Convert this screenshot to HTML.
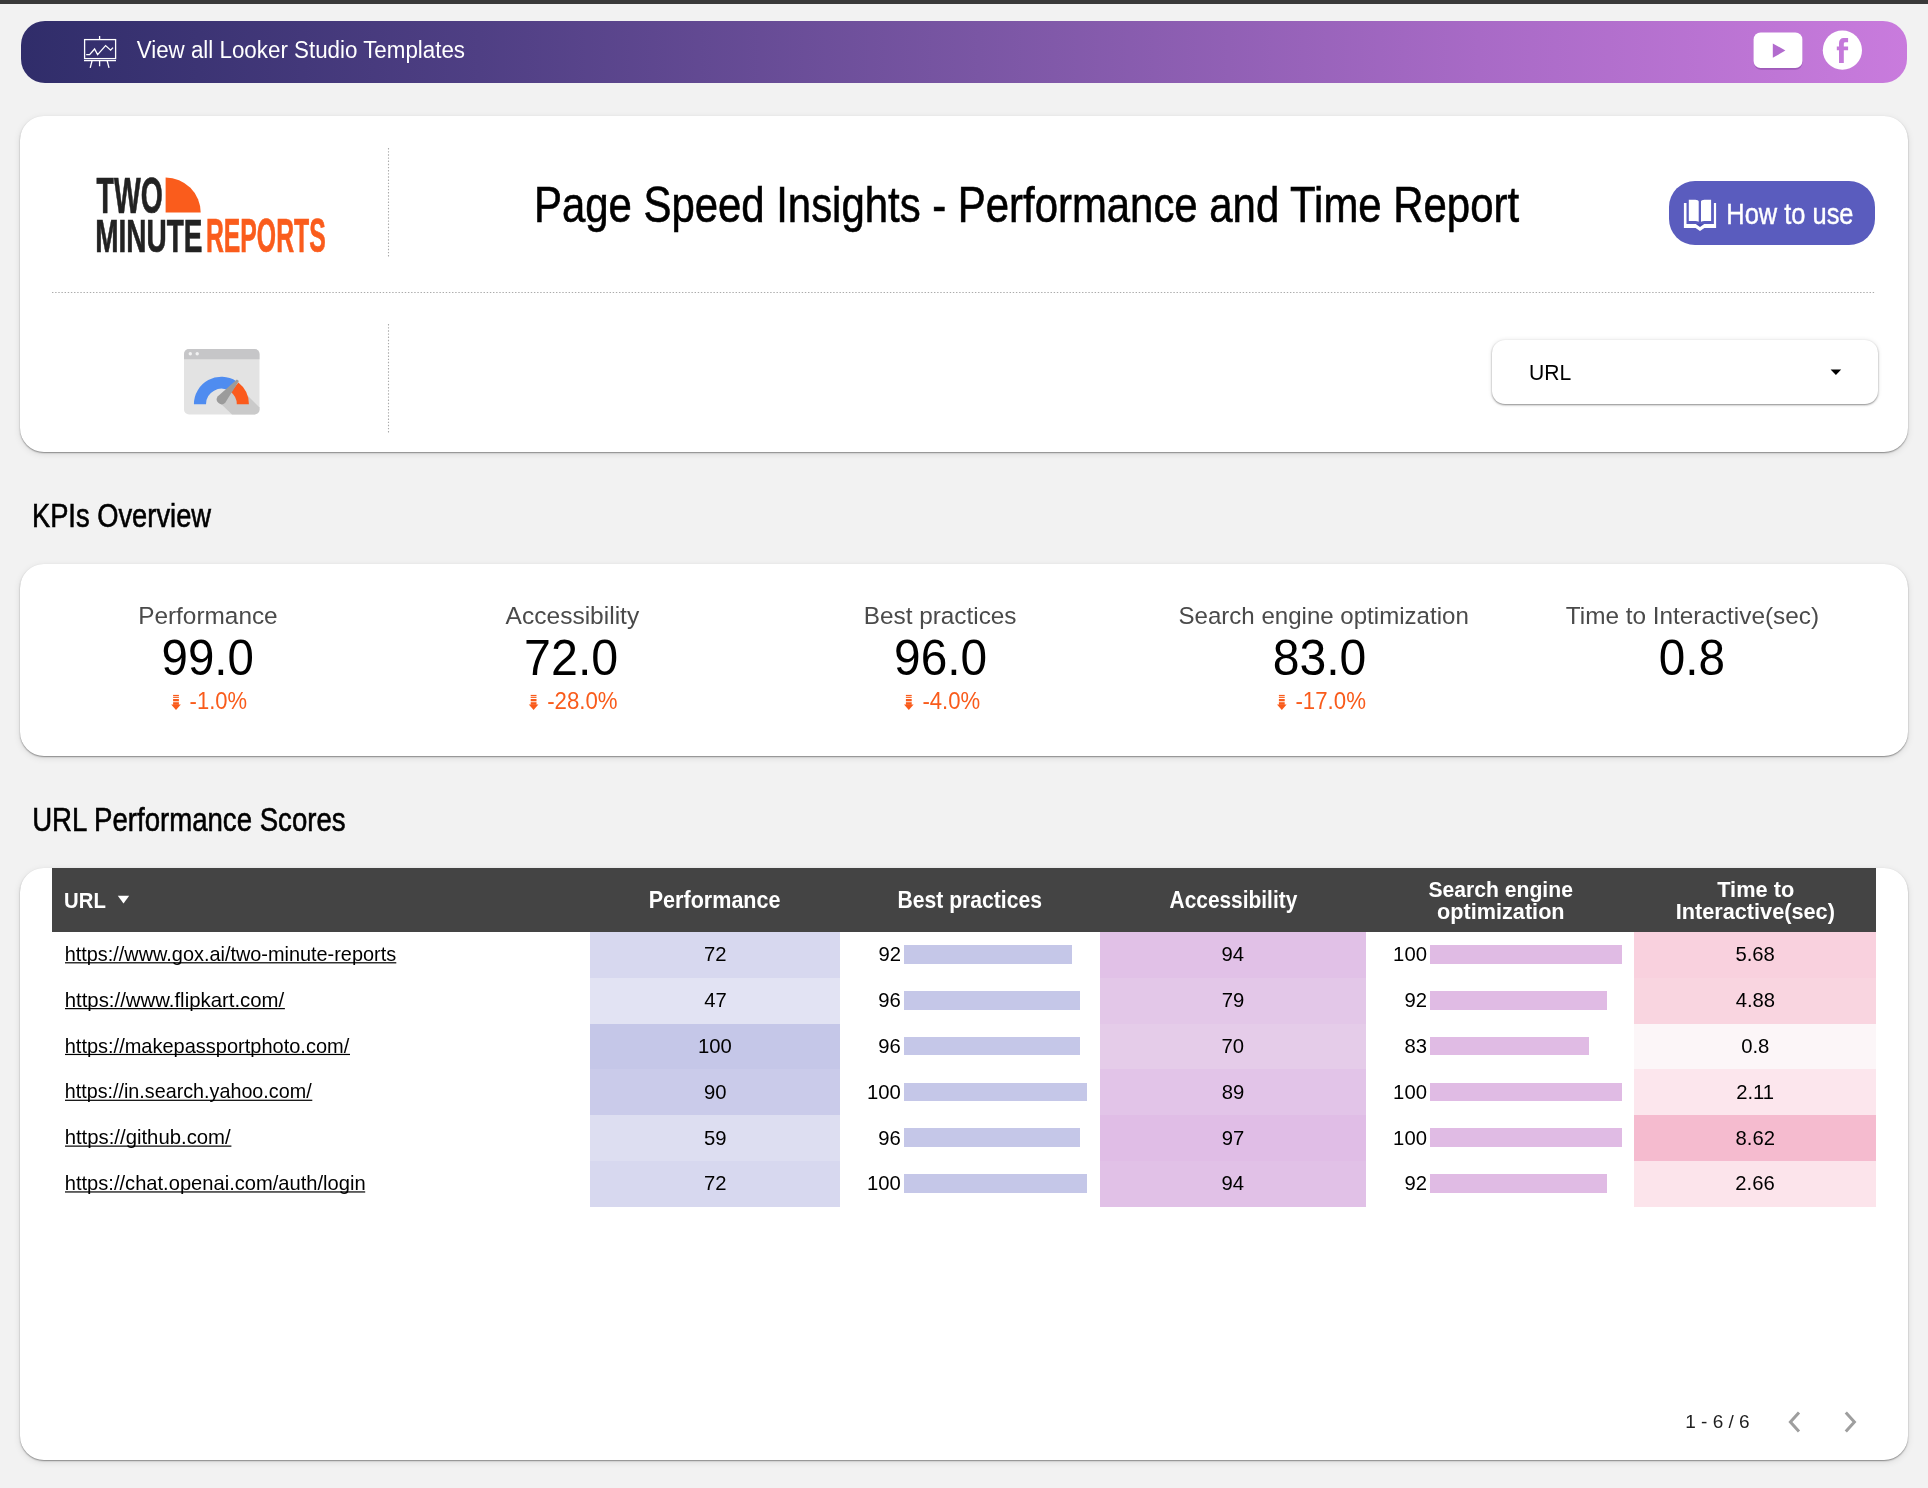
<!DOCTYPE html>
<html><head><meta charset="utf-8"><title>Page Speed Insights - Performance and Time Report</title>
<style>
html,body{margin:0;padding:0}
body{width:1928px;height:1488px;background:#f2f2f2;position:relative;overflow:hidden;font-family:"Liberation Sans",sans-serif}
.a{position:absolute}
.card{position:absolute;background:#fff;border-radius:24px;box-shadow:0 1px 1.5px rgba(0,0,0,.40),0 2px 7px rgba(0,0,0,.10)}
svg text{font-family:"Liberation Sans",sans-serif}
</style></head><body>
<div class="a" style="left:0;top:0;width:1928px;height:4px;background:#3a3a3a"></div>
<div class="a" style="left:21px;top:21px;width:1886px;height:62px;border-radius:24px;background:linear-gradient(90deg,#302d6a 0%,#4f3f84 24.3%,#7a56a4 50.8%,#a86ac6 77.3%,#c97bdd 100%)"></div>
<div class="card" style="left:20px;top:116px;width:1888px;height:336px"></div>
<div class="a" style="left:1492px;top:340px;width:386px;height:64px;border-radius:13px;background:#fff;box-shadow:0 1px 2px rgba(0,0,0,.42),0 0 5px rgba(0,0,0,.10)"></div>
<div class="a" style="left:1669px;top:181px;width:206px;height:64px;border-radius:26px;background:#5a5cbe"></div>
<div class="card" style="left:20px;top:564px;width:1888px;height:192px"></div>
<div class="card" style="left:20px;top:868px;width:1888px;height:592px"></div>
<div class="a" style="left:52px;top:868px;width:1824px;height:64px;background:#444"></div>

<div class="a" style="left:590px;top:932px;width:250px;height:46px;background:#d7d8ef"></div>
<div class="a" style="left:1100px;top:932px;width:266px;height:46px;background:#e1c1e7"></div>
<div class="a" style="left:1634px;top:932px;width:242px;height:46px;background:#f9d1de"></div>
<div class="a" style="left:904px;top:945.10px;width:168.36px;height:18.7px;background:#c5c7e8"></div>
<div class="a" style="left:1430px;top:945.10px;width:192.00px;height:18.7px;background:#e0bbe4"></div>
<div class="a" style="left:590px;top:978px;width:250px;height:46px;background:#e2e3f3"></div>
<div class="a" style="left:1100px;top:978px;width:266px;height:46px;background:#e3c7e8"></div>
<div class="a" style="left:1634px;top:978px;width:242px;height:46px;background:#f9d5e0"></div>
<div class="a" style="left:904px;top:990.93px;width:175.68px;height:18.7px;background:#c5c7e8"></div>
<div class="a" style="left:1430px;top:990.93px;width:176.64px;height:18.7px;background:#e0bbe4"></div>
<div class="a" style="left:590px;top:1024px;width:250px;height:45px;background:#c5c7e8"></div>
<div class="a" style="left:1100px;top:1024px;width:266px;height:45px;background:#e5cce9"></div>
<div class="a" style="left:1634px;top:1024px;width:242px;height:45px;background:#fcf6f8"></div>
<div class="a" style="left:904px;top:1036.77px;width:175.68px;height:18.7px;background:#c5c7e8"></div>
<div class="a" style="left:1430px;top:1036.77px;width:159.36px;height:18.7px;background:#e0bbe4"></div>
<div class="a" style="left:590px;top:1069px;width:250px;height:46px;background:#cacbea"></div>
<div class="a" style="left:1100px;top:1069px;width:266px;height:46px;background:#e2c4e8"></div>
<div class="a" style="left:1634px;top:1069px;width:242px;height:46px;background:#fce6ed"></div>
<div class="a" style="left:904px;top:1082.60px;width:183.00px;height:18.7px;background:#c5c7e8"></div>
<div class="a" style="left:1430px;top:1082.60px;width:192.00px;height:18.7px;background:#e0bbe4"></div>
<div class="a" style="left:590px;top:1115px;width:250px;height:46px;background:#dddef1"></div>
<div class="a" style="left:1100px;top:1115px;width:266px;height:46px;background:#e0bde6"></div>
<div class="a" style="left:1634px;top:1115px;width:242px;height:46px;background:#f5bbcf"></div>
<div class="a" style="left:904px;top:1128.43px;width:175.68px;height:18.7px;background:#c5c7e8"></div>
<div class="a" style="left:1430px;top:1128.43px;width:192.00px;height:18.7px;background:#e0bbe4"></div>
<div class="a" style="left:590px;top:1161px;width:250px;height:46px;background:#d7d8ef"></div>
<div class="a" style="left:1100px;top:1161px;width:266px;height:46px;background:#e1c1e7"></div>
<div class="a" style="left:1634px;top:1161px;width:242px;height:46px;background:#fce4eb"></div>
<div class="a" style="left:904px;top:1174.27px;width:183.00px;height:18.7px;background:#c5c7e8"></div>
<div class="a" style="left:1430px;top:1174.27px;width:176.64px;height:18.7px;background:#e0bbe4"></div>
<svg class="a" style="left:0;top:0;will-change:transform" width="1928" height="1488" viewBox="0 0 1928 1488">
<g fill="none" stroke="#fff" stroke-width="1.3">
<rect x="84.6" y="39.6" width="31" height="19"/>
<path d="M99.6 36v3.6M84 60.6h32M92 61l-1.8 6.8M99.6 61v5.2M107.2 61l1.8 6.8"/>
<path d="M86.2 54.6h3.4l5-5.6 3 5.6 8-9 5 4.6 2.4-2.6"/>
</g>
<rect x="1754" y="34.2" width="48.4" height="35.6" rx="7" fill="#8a4aa6" opacity=".6"/>
<rect x="1753.6" y="32.4" width="48.8" height="35.7" rx="7" fill="#fff"/>
<path d="M1772.8 43.4v14.4l12.6-7.2z" fill="#b26bce"/>
<circle cx="1842.4" cy="50.2" r="19.6" fill="#fff"/>
<path d="M1839 62.9V50.3h-2.2v-3.9h2.2v-3.2c0-3.2 1.8-5.2 4.6-5.2h4.5v4.3h-2.6c-1.2 0-1.7.5-1.7 1.6v2.5h4.3v3.9h-4.3V62.9z" fill="#c479da"/>

<path d="M165.6 212.6V177.5A35.1 35.1 0 0 1 200.7 212.6Z" fill="#fa5c1c"/>
<g stroke="#ababab" stroke-width="1.1" stroke-dasharray="1.4 1.75">
<path d="M388.5 148v110M388.5 324v110"/>
<path d="M52 292.5h1823"/>
</g>
<g>
<rect x="184" y="349" width="75.5" height="65.5" rx="5" fill="#e3e3e3"/>
<path d="M184 359.2V354a5 5 0 0 1 5-5h65.5a5 5 0 0 1 5 5v5.2z" fill="#c6c6c8"/>
<circle cx="190.3" cy="353.8" r="1.7" fill="#f2f2f2"/><circle cx="197.2" cy="353.8" r="1.7" fill="#f2f2f2"/>
<path d="M218 401 L236 384 L259.5 407.5 V409.5 a5 5 0 0 1 -5 5 H232 Z" fill="#cacaca"/>
<path d="M193.90 404.20A27.5 27.5 0 0 1 236.38 381.14L229.79 391.28A15.4 15.4 0 0 0 206.00 404.20Z" fill="#4f8cf0"/>
<path d="M238.33 382.53A27.5 27.5 0 0 1 248.90 404.20L236.80 404.20A15.4 15.4 0 0 0 230.88 392.06Z" fill="#fb5a1c"/>
<path d="M217.6 396.4 L236.9 379.5 L238.9 381.1 L225.2 402.8 A5 5 0 0 1 217.6 396.4 Z" fill="#9b9b9b"/>
</g>
<g fill="#fff">
<path d="M1683.9 202.9h2.6v21h27.4v-21h2.2v25h-11.7l-4.4 3.2-4.4-3.2h-11.7z"/>
<path d="M1688.8 199.8h6.6c1.6 0 3.3.7 3.3 1.8V221.8c-.9-.6-2.2-.9-3.3-.9h-6.6z"/>
<path d="M1711.1 199.8h-6.8c-1.6 0-3.3.7-3.3 1.8V221.8c.9-.6 2.2-.9 3.3-.9h6.8z"/>
<path d="M1695.8 223.9l4.2 3.2 4.2-3.2z" fill="#4b4db3"/>
</g>
<path d="M1830.6 369.4h10.6l-5.3 5.6z" fill="#000"/>
<path d="M117.8 895.7h11.4l-5.7 7.9z" fill="#fff"/>
<g fill="#f95b1b"><rect x="173.1" y="694.9" width="5.8" height="1.2"/><rect x="173.1" y="696.8" width="5.8" height="1.1"/><rect x="173.1" y="699" width="5.8" height="2.3"/><rect x="173.1" y="702.2" width="5.8" height="2.6"/><path d="M171.2 704.6h9.6l-4.8 5.4z"/></g>
<g fill="#f95b1b"><rect x="530.7" y="694.9" width="5.8" height="1.2"/><rect x="530.7" y="696.8" width="5.8" height="1.1"/><rect x="530.7" y="699" width="5.8" height="2.3"/><rect x="530.7" y="702.2" width="5.8" height="2.6"/><path d="M528.8 704.6h9.6l-4.8 5.4z"/></g>
<g fill="#f95b1b"><rect x="905.9" y="694.9" width="5.8" height="1.2"/><rect x="905.9" y="696.8" width="5.8" height="1.1"/><rect x="905.9" y="699" width="5.8" height="2.3"/><rect x="905.9" y="702.2" width="5.8" height="2.6"/><path d="M904.0 704.6h9.6l-4.8 5.4z"/></g>
<g fill="#f95b1b"><rect x="1278.9" y="694.9" width="5.8" height="1.2"/><rect x="1278.9" y="696.8" width="5.8" height="1.1"/><rect x="1278.9" y="699" width="5.8" height="2.3"/><rect x="1278.9" y="702.2" width="5.8" height="2.6"/><path d="M1277.0 704.6h9.6l-4.8 5.4z"/></g>
<path d="M1799 1412.5l-8.6 9.5 8.6 9.5" fill="none" stroke="#9e9e9e" stroke-width="3"/>
<path d="M1845.8 1412.5l8.6 9.5-8.6 9.5" fill="none" stroke="#9e9e9e" stroke-width="3"/>
<text transform="translate(136.70,57.90) scale(0.9704,1)" font-size="23.04" fill="#fff">View all Looker Studio Templates</text>
<text transform="translate(533.95,222.20) scale(0.8284,1)" font-size="50.58" fill="#000" stroke="#000" stroke-width="0.6">Page Speed Insights - Performance and Time Report</text>
<text transform="translate(1726.26,224.00) scale(0.8604,1)" font-size="29.57" fill="#fff" stroke="#fff" stroke-width="0.4">How to use</text>
<text transform="translate(1529.12,379.80) scale(0.9219,1)" font-size="22.90" fill="#000">URL</text>
<text transform="translate(31.91,527.10) scale(0.8380,1)" font-size="32.61" fill="#000" stroke="#000" stroke-width="0.6">KPIs Overview</text>
<text transform="translate(32.17,831.10) scale(0.8319,1)" font-size="33.19" fill="#000" stroke="#000" stroke-width="0.6">URL Performance Scores</text>
<text transform="translate(138.15,624.10) scale(1.0011,1)" font-size="24.35" fill="#4a4a4a">Performance</text>
<text transform="translate(505.60,624.10) scale(1.0076,1)" font-size="24.35" fill="#4a4a4a">Accessibility</text>
<text transform="translate(863.75,624.10) scale(0.9998,1)" font-size="24.35" fill="#4a4a4a">Best practices</text>
<text transform="translate(1178.44,624.10) scale(1.0178,1)" font-size="23.66" fill="#4a4a4a">Search engine optimization</text>
<text transform="translate(1565.81,624.10) scale(0.9993,1)" font-size="24.35" fill="#4a4a4a">Time to Interactive(sec)</text>
<text transform="translate(161.50,675.00) scale(0.9596,1)" font-size="49.43" fill="#000">99.0</text>
<text transform="translate(524.08,675.00) scale(0.9789,1)" font-size="49.43" fill="#000">72.0</text>
<text transform="translate(894.09,675.00) scale(0.9671,1)" font-size="49.43" fill="#000">96.0</text>
<text transform="translate(1272.68,675.00) scale(0.9736,1)" font-size="49.43" fill="#000">83.0</text>
<text transform="translate(1658.77,675.00) scale(0.9642,1)" font-size="49.43" fill="#000">0.8</text>
<text transform="translate(189.62,709.00) scale(0.9044,1)" font-size="24.35" fill="#f95b1b">-1.0%</text>
<text transform="translate(547.21,709.00) scale(0.9263,1)" font-size="24.00" fill="#f95b1b">-28.0%</text>
<text transform="translate(922.41,709.00) scale(0.9224,1)" font-size="24.00" fill="#f95b1b">-4.0%</text>
<text transform="translate(1295.41,709.00) scale(0.9144,1)" font-size="24.35" fill="#f95b1b">-17.0%</text>
<text transform="translate(64.08,908.10) scale(0.9160,1)" font-size="22.17" font-weight="700" fill="#fff">URL</text>
<text transform="translate(648.71,908.10) scale(0.9130,1)" font-size="23.62" font-weight="700" fill="#fff">Performance</text>
<text transform="translate(897.43,908.10) scale(0.8961,1)" font-size="23.62" font-weight="700" fill="#fff">Best practices</text>
<text transform="translate(1169.58,908.10) scale(0.8972,1)" font-size="23.29" font-weight="700" fill="#fff">Accessibility</text>
<text transform="translate(1428.48,897.00) scale(0.9423,1)" font-size="22.43" font-weight="700" fill="#fff">Search engine</text>
<text transform="translate(1437.05,918.80) scale(0.9660,1)" font-size="22.43" font-weight="700" fill="#fff">optimization</text>
<text transform="translate(1717.18,897.00) scale(0.9716,1)" font-size="22.43" font-weight="700" fill="#fff">Time to</text>
<text transform="translate(1675.70,918.80) scale(0.9677,1)" font-size="22.43" font-weight="700" fill="#fff">Interactive(sec)</text>
<text transform="translate(64.71,960.90) scale(1.0016,1)" font-size="19.86" fill="#000">https://www.gox.ai/two-minute-reports</text>
<text transform="translate(64.68,1006.73) scale(1.0259,1)" font-size="19.86" fill="#000">https://www.flipkart.com/</text>
<text transform="translate(64.70,1052.56) scale(1.0075,1)" font-size="19.86" fill="#000">https://makepassportphoto.com/</text>
<text transform="translate(64.71,1098.39) scale(0.9945,1)" font-size="19.86" fill="#000">https://in.search.yahoo.com/</text>
<text transform="translate(64.68,1144.22) scale(1.0239,1)" font-size="19.86" fill="#000">https://github.com/</text>
<text transform="translate(64.69,1190.05) scale(1.0138,1)" font-size="19.86" fill="#000">https://chat.openai.com/auth/login</text>
<text transform="translate(1685.17,1427.70) scale(0.9872,1)" font-size="19.28" fill="#1f1f1f">1 - 6 / 6</text>
<text transform="translate(96.62,212.60) scale(0.5648,1)" font-size="50.14" font-weight="700" fill="#222" stroke="#222" stroke-width="0.7">TWO</text>
<text transform="translate(95.22,251.70) scale(0.5933,1)" font-size="47.14" font-weight="700" fill="#222" stroke="#222" stroke-width="0.7">MINUTE</text>
<text transform="translate(205.91,251.70) scale(0.5182,1)" font-size="47.83" font-weight="700" fill="#fa5c1c" stroke="#fa5c1c" stroke-width="0.7">REPORTS</text>
<rect x="65" y="962.20" width="331.30" height="1.2" fill="#000"/>
<rect x="65" y="1008.03" width="219.90" height="1.2" fill="#000"/>
<rect x="65" y="1053.86" width="285.00" height="1.2" fill="#000"/>
<rect x="65" y="1099.69" width="247.30" height="1.2" fill="#000"/>
<rect x="65" y="1145.52" width="166.40" height="1.2" fill="#000"/>
<rect x="65" y="1191.35" width="300.20" height="1.2" fill="#000"/>
<text transform="translate(703.99,961.20) scale(1.0136,1)" font-size="20.00" fill="#000">72</text>
<text transform="translate(878.39,961.20) scale(1.0136,1)" font-size="20.00" fill="#000">92</text>
<text transform="translate(1221.59,961.20) scale(1.0136,1)" font-size="20.00" fill="#000">94</text>
<text transform="translate(1393.11,961.20) scale(1.0136,1)" font-size="20.00" fill="#000">100</text>
<text transform="translate(1735.43,961.20) scale(1.0136,1)" font-size="20.00" fill="#000">5.68</text>
<text transform="translate(704.29,1007.03) scale(1.0136,1)" font-size="20.00" fill="#000">47</text>
<text transform="translate(878.18,1007.03) scale(1.0136,1)" font-size="20.00" fill="#000">96</text>
<text transform="translate(1221.69,1007.03) scale(1.0136,1)" font-size="20.00" fill="#000">79</text>
<text transform="translate(1404.59,1007.03) scale(1.0136,1)" font-size="20.00" fill="#000">92</text>
<text transform="translate(1735.64,1007.03) scale(1.0136,1)" font-size="20.00" fill="#000">4.88</text>
<text transform="translate(698.04,1052.87) scale(1.0136,1)" font-size="20.00" fill="#000">100</text>
<text transform="translate(878.18,1052.87) scale(1.0136,1)" font-size="20.00" fill="#000">96</text>
<text transform="translate(1221.59,1052.87) scale(1.0136,1)" font-size="20.00" fill="#000">70</text>
<text transform="translate(1404.38,1052.87) scale(1.0136,1)" font-size="20.00" fill="#000">83</text>
<text transform="translate(1741.17,1052.87) scale(1.0136,1)" font-size="20.00" fill="#000">0.8</text>
<text transform="translate(703.99,1098.70) scale(1.0136,1)" font-size="20.00" fill="#000">90</text>
<text transform="translate(866.91,1098.70) scale(1.0136,1)" font-size="20.00" fill="#000">100</text>
<text transform="translate(1221.79,1098.70) scale(1.0136,1)" font-size="20.00" fill="#000">89</text>
<text transform="translate(1393.11,1098.70) scale(1.0136,1)" font-size="20.00" fill="#000">100</text>
<text transform="translate(1736.19,1098.70) scale(1.0136,1)" font-size="20.00" fill="#000">2.11</text>
<text transform="translate(704.09,1144.53) scale(1.0136,1)" font-size="20.00" fill="#000">59</text>
<text transform="translate(878.18,1144.53) scale(1.0136,1)" font-size="20.00" fill="#000">96</text>
<text transform="translate(1221.79,1144.53) scale(1.0136,1)" font-size="20.00" fill="#000">97</text>
<text transform="translate(1393.11,1144.53) scale(1.0136,1)" font-size="20.00" fill="#000">100</text>
<text transform="translate(1735.53,1144.53) scale(1.0136,1)" font-size="20.00" fill="#000">8.62</text>
<text transform="translate(703.99,1190.37) scale(1.0136,1)" font-size="20.00" fill="#000">72</text>
<text transform="translate(866.91,1190.37) scale(1.0136,1)" font-size="20.00" fill="#000">100</text>
<text transform="translate(1221.59,1190.37) scale(1.0136,1)" font-size="20.00" fill="#000">94</text>
<text transform="translate(1404.59,1190.37) scale(1.0136,1)" font-size="20.00" fill="#000">92</text>
<text transform="translate(1735.33,1190.37) scale(1.0136,1)" font-size="20.00" fill="#000">2.66</text>
</svg>
</body></html>
